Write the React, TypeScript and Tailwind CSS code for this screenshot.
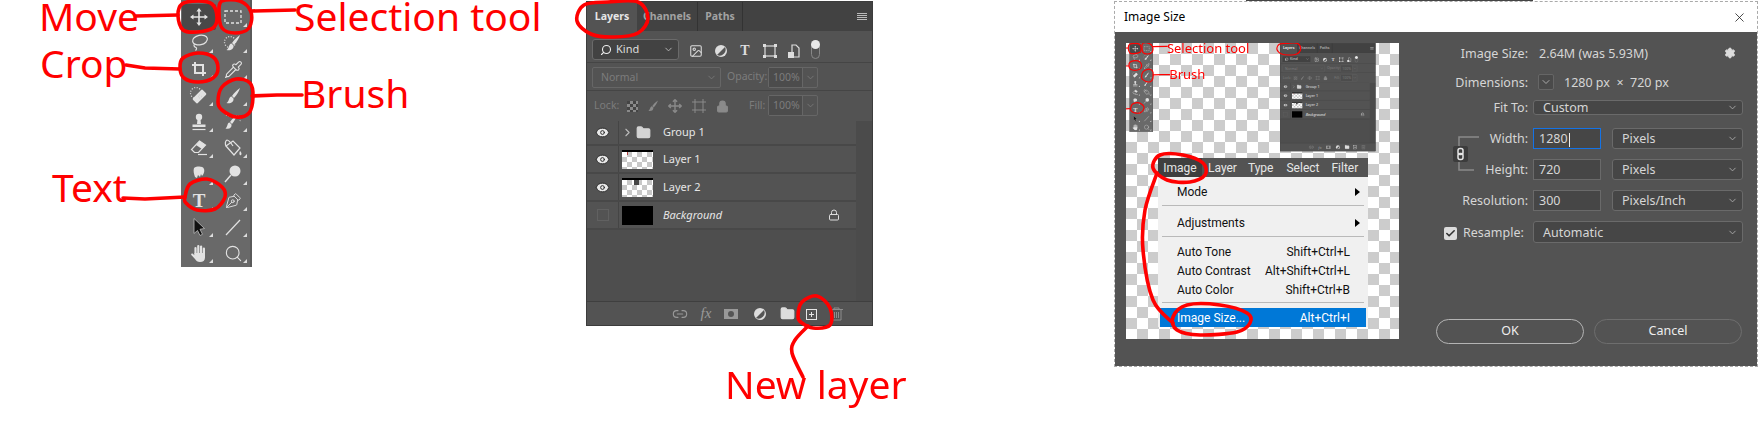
import React from 'react';
import { Pipette, PenTool, Search, Image as ImageIcon, ChevronDown, ChevronRight, Eye, Lock, Folder, Link2, Settings, X, Check } from 'lucide-react';

type Pt = [number, number];

// closed smooth outline through hand-picked points, for the red marker circles
const blob = (pts: Pt[], closed = true) => {
  const n = pts.length;
  const at = (i: number) => (closed ? pts[(i + n) % n] : pts[Math.max(0, Math.min(n - 1, i))]);
  let d = `M${pts[0][0]} ${pts[0][1]}`;
  const last = closed ? n : n - 1;
  for (let i = 0; i < last; i++) {
    const [p0, p1, p2, p3] = [at(i - 1), at(i), at(i + 1), at(i + 2)];
    const c1 = [p1[0] + (p2[0] - p0[0]) / 6, p1[1] + (p2[1] - p0[1]) / 6];
    const c2 = [p2[0] - (p3[0] - p1[0]) / 6, p2[1] - (p3[1] - p1[1]) / 6];
    d += ` C${c1[0]} ${c1[1]} ${c2[0]} ${c2[1]} ${p2[0]} ${p2[1]}`;
  }
  return d + (closed ? 'Z' : '');
};

const Marker = ({ d }: { d: string }) => (
  <path d={d} fill="none" stroke="#ff0000" strokeWidth={3.6} strokeLinecap="round" strokeLinejoin="round" />
);

const Ico = ({ children, size = 20 }: { children: React.ReactNode; size?: number }) => (
  <svg width={size} height={size} viewBox="0 0 20 20" fill="none" stroke="#e2e2e2" strokeWidth={1.2}>
    {children}
  </svg>
);

const brushPath = 'M17 2c-1 3-3 7-6 10l-2-2c2-3 5-6 8-8zM8.500 10.500c-3 .5-2 4.500-5 6.500 4 1 7.500-1 7-4.500z';

const tools: { icon: React.ReactNode; noTri?: boolean }[] = [
  {
    noTri: true,
    icon: (
      <Ico>
        <path d="M10 3v14M3 10h14" strokeWidth={1.6} />
        <path d="M10 1l2.600 3.500h-5.200zM10 19l2.600-3.500h-5.200zM1 10l3.500-2.600v5.200zM19 10l-3.500-2.600v5.200z" fill="#e2e2e2" stroke="none" />
      </Ico>
    ),
  },
  { icon: <Ico><rect x="2" y="4" width="16" height="12" strokeDasharray="3 2" strokeWidth={1.3} /></Ico> },
  { icon: <Ico><ellipse cx="11" cy="7" rx="7.500" ry="4.800" transform="rotate(-12 11 7)" /><path d="M5.500 11c-1.500 2 .5 3 1.500 3.500 1 .5.500 2-.5 3" /></Ico> },
  { icon: <Ico><circle cx="7" cy="9" r="5.500" strokeDasharray="1 1.600" strokeWidth={1.3} /><path d={brushPath} fill="#e2e2e2" stroke="none" /></Ico> },
  { icon: <Ico><path d="M6 3v11h11M3 6h11v11" strokeWidth={2} /></Ico> },
  { icon: <Pipette size={19} color="#e2e2e2" strokeWidth={1.4} /> },
  {
    icon: (
      <Ico>
        <circle cx="7" cy="7" r="5.500" strokeDasharray="1 1.600" />
        <rect x="3.500" y="7" width="14" height="7" rx="1.500" transform="rotate(-45 10.500 10.500)" fill="#e2e2e2" stroke="none" />
        <path d="M9 10.500h.1M10.500 9h.1M12 10.500h.1M10.500 12h.1" stroke="#555" strokeWidth={1.6} />
      </Ico>
    ),
  },
  { icon: <Ico><path d={brushPath} fill="#e2e2e2" stroke="none" /></Ico> },
  { icon: <Ico><circle cx="10" cy="5" r="3.200" fill="#e2e2e2" stroke="none" /><path d="M8.500 7h3l.5 5h-4zM3.500 12.500h13v2.500h-13z" fill="#e2e2e2" stroke="none" /><path d="M3.500 17.500h13" /></Ico> },
  { icon: <Ico><path d="M3 3l6 2M15 4a4 4 0 0 1 2 5" strokeDasharray="1 1.500" /><path d="M14 3c-1 3-2.500 6-5 9l-2-2c2-3 4-5 7-7zM6.500 10.500c-2.500.5-1.500 4-4 6 4 1 6.500-1 6-4z" fill="#e2e2e2" stroke="none" /></Ico> },
  { icon: <Ico><path d="M10.500 3l6 4-7 7.500H5.500l-3-3z" /><path d="M10.500 3l6 4-3.500 4-6-4z" fill="#e2e2e2" stroke="none" /><path d="M9 16.500h9" /></Ico> },
  { icon: <Ico><path d="M3 8l7-5 7 7-6 7z" /><path d="M3 8c-1-2-1-5 1-6 2 0 4 3 6 6" /><path d="M17 13c1.500 1.500 2 3 1 4s-2.500-1-1-4z" fill="#e2e2e2" stroke="none" /></Ico> },
  { icon: <Ico><path d="M5 4c3-2 9-2 10 1 1 3-1 6-2 7l-1-2-1 3-2-2-1 3-2-1c-1-3-2-6-1-9z" fill="#e2e2e2" stroke="none" /></Ico> },
  { icon: <Ico><circle cx="12" cy="7" r="5.500" fill="#e2e2e2" stroke="none" /><path d="M8 11l-6 7" strokeWidth={1.4} /></Ico> },
  { icon: <span className="font-['Liberation_Serif',serif] text-[19px] font-bold leading-none text-[#e2e2e2]">T</span> },
  { icon: <PenTool size={17} color="#e2e2e2" strokeWidth={1.3} className="-scale-y-100" /> },
  { icon: <Ico><path d="M5 1.500v15l3.500-3 2.500 5 2.500-1.200-2.500-5 4.500-.8z" fill="#111" stroke="#bbb" strokeWidth={0.8} /></Ico> },
  { icon: <Ico><path d="M3 18L17 3" /></Ico> },
  {
    icon: (
      <Ico>
        <path d="M6.500 11V5M9.300 10V3M12.100 10V3.500M14.900 11V5.500" strokeWidth={2.2} strokeLinecap="round" />
        <path d="M5.400 10h10.600v4.500c0 3-2 4.500-5 4.500-2.500 0-3.800-1-5-3L2.300 12c-.6-1 .8-2 1.800-1l1.300 1.300z" fill="#e2e2e2" stroke="none" />
      </Ico>
    ),
  },
  { icon: <Search size={19} color="#e2e2e2" strokeWidth={1.4} /> },
];

const Toolbar = () => (
  <div className="absolute left-[181px] top-0 grid h-[267px] w-[71px] grid-cols-[34px_34px] auto-rows-[26.3px] content-start border-r-[2px] border-r-[#5a5a5a] bg-[#696969] pl-px pt-[3.5px]">
    {tools.map((t, i) => (
      <div key={i} className={`relative flex items-center justify-center ${i === 0 ? 'rounded-[2px] bg-[#484848]' : ''}`}>
        {t.icon}
        {!t.noTri && (
          <span className="absolute bottom-[3px] right-[3px] h-0 w-0 border-b-[4px] border-l-[4px] border-b-[#dcdcdc] border-l-transparent" />
        )}
      </div>
    ))}
  </div>
);

const Label = ({ className, children }: { className: string; children: React.ReactNode }) => (
  <span className={`absolute whitespace-nowrap font-['Noto_Sans',sans-serif] text-[39px] leading-[30px] text-[#ff0000] ${className}`}>{children}</span>
);

// toolbar plus its hand-written callouts; also shown shrunk inside the dialog preview
const ToolFigure = () => (
  <div className="relative h-[270px] w-[560px]">
    <Toolbar />
    <svg className="absolute left-0 top-0 overflow-visible" width={560} height={270}>
      <Marker d={blob([[178, 16], [182, 4], [198, 1], [212, 4], [217, 17], [213, 28], [197, 32], [183, 30]])} />
      <Marker d="M136 16L178 15" />
      <Marker d={blob([[219, 12], [222, 1], [240, 1], [251, 12], [249, 28], [235, 33], [222, 28]])} />
      <Marker d="M251 11L295 10" />
      <Marker d={blob([[180, 68], [183, 58], [198, 53], [213, 57], [218, 68], [213, 78], [198, 82], [184, 78]])} />
      <Marker d="M126 65L145 68L180 69" />
      <Marker d={blob([[218, 102], [222, 87], [236, 79], [250, 83], [253, 97], [249, 113], [236, 117], [222, 110]])} />
      <Marker d="M252 96L277 95L302 95" />
      <Marker d={blob([[185, 197], [190, 184], [207, 179], [222, 187], [225, 197], [215, 209], [197, 210], [186, 203]])} />
      <Marker d="M123 198L145 199L185 197" />
    </svg>
    <Label className="left-[39px] top-[1px]">Move</Label>
    <Label className="left-[294px] top-[1px]">Selection tool</Label>
    <Label className="left-[40px] top-[48px]">Crop</Label>
    <Label className="left-[301px] top-[78px]">Brush</Label>
    <Label className="left-[52px] top-[172px]">Text</Label>
  </div>
);

const Thumb = ({ mark }: { mark?: 'red' | 'dark' }) => (
  <div className="relative h-[19px] w-[31px] border-t-2 border-t-black bg-[repeating-conic-gradient(#c8c8c8_0_25%,#ffffff_0_50%)] bg-[length:10px_10px]">
    {mark === 'red' && <i className="absolute left-[5px] top-0 h-[3px] w-px bg-[#b04040]" />}
    {mark === 'dark' && <i className="absolute left-[12px] top-0 h-[5px] w-[5px] bg-[#454545]" />}
  </div>
);

const EyeCell = ({ on = true }: { on?: boolean }) => (
  <div className="flex w-[32px] shrink-0 items-center justify-center self-stretch border-r border-r-[#454545]">
    {on ? (
      <Eye size={15} color="#2e2e2e" fill="#e8e8e8" strokeWidth={1.6} />
    ) : (
      <span className="h-[12px] w-[12px] border border-[#616161]" />
    )}
  </div>
);

const Mute = ({ className, children }: { className: string; children: React.ReactNode }) => (
  <span className={`absolute text-[10.500px] text-[#7c7c7c] ${className}`}>{children}</span>
);

const PctBox = ({ left }: { left: string }) => (
  <div className={`absolute top-[4px] flex h-[21px] w-[50px] rounded-[2px] border border-[#666] ${left}`}>
    <span className="flex-1 bg-[#4c4c4c] pl-[4px] text-[10.500px] leading-[19px] text-[#7c7c7c]">100%</span>
    <span className="flex w-[15px] items-center justify-center border-l border-l-[#666]">
      <ChevronDown size={11} color="#777" />
    </span>
  </div>
);

const LayersPanel = ({ circled }: { circled?: boolean }) => (
  <div className="relative flex h-[325px] w-[287px] flex-col border border-[#3c3c3c] bg-[#535353] font-['Noto_Sans',sans-serif]">
    <div className="flex h-[29px] shrink-0 items-stretch bg-[#424242] text-[10.500px] font-bold">
      <span className="flex w-[50px] items-center justify-center bg-[#535353] text-[#e6e6e6]">Layers</span>
      <span className="flex w-[61px] items-center justify-center border-r border-r-[#333] text-[#a2a2a2]">Channels</span>
      <span className="flex w-[45px] items-center justify-center border-r border-r-[#333] text-[#a2a2a2]">Paths</span>
      <span className="ml-auto mr-[5px] flex w-[10px] flex-col justify-center gap-[1px]">
        <i className="h-px bg-[#bbb]" /><i className="h-px bg-[#bbb]" /><i className="h-px bg-[#bbb]" /><i className="h-px bg-[#bbb]" />
      </span>
    </div>

    <div className="relative h-[32px] shrink-0 border-b border-b-[#454545]">
      <div className="absolute left-[5px] top-[8px] flex h-[21px] w-[87px] items-center rounded-[3px] border border-[#6a6a6a] bg-[#424242] pl-[7px] text-[11px] text-[#dedede]">
        <Search size={12} color="#eee" strokeWidth={2.2} className="-scale-x-100" />
        <span className="ml-[4px]">Kind</span>
        <ChevronDown size={11} color="#bbb" className="ml-auto mr-[4px]" />
      </div>
      <div className="absolute left-[102px] top-[11px] flex items-center gap-[10.500px]">
        <ImageIcon size={14} color="#ddd" strokeWidth={1.8} />
        <svg width="14" height="14" viewBox="0 0 14 14"><circle cx="7" cy="7" r="6" fill="#ddd" /><path d="M3 11L11 3A6 6 0 0 1 3 11z" fill="#555" /></svg>
        <span className="w-[14px] text-center font-['Liberation_Serif',serif] text-[14px] font-bold leading-[14px] text-[#ddd]">T</span>
        <svg width="14" height="14" viewBox="0 0 14 14" fill="none" stroke="#ddd" strokeWidth="1.2"><rect x="2" y="2" width="10" height="10" /><path d="M0 0h3v3H0zM11 0h3v3h-3zM0 11h3v3H0zM11 11h3v3h-3z" fill="#ddd" stroke="none" /></svg>
        <svg width="14" height="14" viewBox="0 0 14 14" fill="none" stroke="#ddd" strokeWidth="1.2"><path d="M5 1h4l3 3v9H5z" /><rect x="1" y="8" width="6" height="6" fill="#ddd" stroke="none" /></svg>
        <span className="relative ml-[-1px] h-[17px] w-[9px] rounded-full border border-[#888]">
          <i className="absolute left-[-1px] top-[-3px] h-[9px] w-[9px] rounded-full bg-[#e8e8e8]" />
        </span>
      </div>
    </div>

    <div className="relative h-[28px] shrink-0 border-b border-b-[#454545]">
      <div className="absolute left-[5px] top-[4px] flex h-[21px] w-[129px] items-center rounded-[2px] border border-[#666] pl-[8px] text-[10.500px] text-[#7c7c7c]">
        Normal
        <ChevronDown size={11} color="#777" className="ml-auto mr-[3px]" />
      </div>
      <Mute className="left-[140px] top-[6px]">Opacity:</Mute>
      <PctBox left="left-[181px]" />
    </div>

    <div className="relative h-[30px] shrink-0">
      <Mute className="left-[7px] top-[7px]">Lock:</Mute>
      <div className="absolute left-[40px] top-[8px] flex items-center gap-[8px]">
        <span className="h-[11px] w-[11px] bg-[repeating-conic-gradient(#8a8a8a_0_25%,#444_0_50%)] bg-[length:6px_6px]" />
        <svg width="14" height="14" viewBox="0 0 20 20"><path d={brushPath} fill="#8a8a8a" /></svg>
        <svg width="14" height="14" viewBox="0 0 20 20" fill="none" stroke="#8a8a8a" strokeWidth="2"><path d="M10 1v18M1 10h18M7 4l3-3 3 3M7 16l3 3 3-3M4 7l-3 3 3 3M16 7l3 3-3 3" /></svg>
        <svg className="ml-[2px]" width="14" height="14" viewBox="0 0 14 14" fill="none" stroke="#8a8a8a"><path d="M0 3h14M3 0v14M11 0v14M0 11h14" /></svg>
        <Lock size={13} color="#8a8a8a" fill="#8a8a8a" className="ml-[2px]" />
      </div>
      <Mute className="left-[162px] top-[7px]">Fill:</Mute>
      <PctBox left="left-[181px]" />
    </div>

    <div className="flex min-h-0 flex-1">
      <div className="flex w-[269px] flex-col bg-[#4e4e4e] text-[11px] text-[#e6e6e6]">
        <div className="flex h-[25px] items-center border-b-2 border-b-[#484848] bg-[#535353]">
          <EyeCell />
          <ChevronRight size={13} color="#bbb" className="ml-[2px]" />
          <Folder size={15} color="#d4d4d4" fill="#d4d4d4" className="ml-[2px]" />
          <span className="ml-[12px]">Group 1</span>
        </div>
        <div className="flex h-[28px] items-center border-b-2 border-b-[#484848] bg-[#535353]">
          <EyeCell />
          <span className="ml-[3px]"><Thumb mark="red" /></span>
          <span className="ml-[10px]">Layer 1</span>
        </div>
        <div className="flex h-[28px] items-center border-b-2 border-b-[#484848] bg-[#535353]">
          <EyeCell />
          <span className="ml-[3px]"><Thumb mark="dark" /></span>
          <span className="ml-[10px]">Layer 2</span>
        </div>
        <div className="flex h-[28px] items-center border-b-2 border-b-[#484848] bg-[#535353]">
          <EyeCell on={false} />
          <span className="ml-[3px] h-[19px] w-[31px] bg-black" />
          <span className="ml-[10px] italic">Background</span>
          <Lock size={12} color="#ddd" className="ml-auto mr-[16px]" />
        </div>
      </div>
      <div className="flex-1 bg-[#4b4b4b]" />
    </div>

    <div className="flex h-[24px] shrink-0 items-center justify-end gap-[9px] border-t border-t-[#3f3f3f] bg-[#535353] pr-[29px]">
      <Link2 size={16} color="#999" strokeWidth={1.7} />
      <span className="w-[18px] text-center font-['Liberation_Serif',serif] text-[15px] italic leading-none text-[#999]">fx</span>
      <svg width="16" height="12" viewBox="0 0 16 12"><rect width="14" height="10" y="1" fill="#999" /><circle cx="7" cy="6" r="3" fill="#555" /></svg>
      <svg className="ml-[3px]" width="16" height="14" viewBox="0 0 14 14"><circle cx="7" cy="7" r="6" fill="#ddd" /><path d="M3 11L11 3A6 6 0 0 1 3 11z" fill="#555" /></svg>
      <Folder size={15} color="#ddd" fill="#ddd" className="ml-[3px]" />
      <svg width="14" height="14" viewBox="0 0 14 14" fill="none" stroke="#e6e6e6"><rect x="2.500" y="2.500" width="10" height="10" /><path d="M7.500 5v5M5 7.500h5" /></svg>
      <svg className="ml-[3px]" width="13" height="14" viewBox="0 0 13 14" fill="none" stroke="#8d8d8d"><path d="M0 2.500h13M4 2.500V1h5v1.500M2 3v10h9V3M4.500 5v6M6.500 5v6M8.500 5v6" /></svg>
    </div>

    {circled && (
      <svg className="absolute left-0 top-0 overflow-visible" width={287} height={325}>
        <Marker d={blob([[-10, 19], [-3, 3], [21, 0], [51, 0], [61, 16], [51, 31], [27, 35], [4, 32]])} />
      </svg>
    )}
  </div>
);

const MenuRow = ({ left, right, arrow }: { left: string; right?: string; arrow?: boolean }) => (
  <div className={`flex h-[19px] items-center pl-[17px] text-[12px] text-[#111] ${arrow ? 'pr-[6px]' : 'pr-[16px]'}`}>
    <span>{left}</span>
    {right && <span className="ml-auto">{right}</span>}
    {arrow && <span className="ml-auto h-0 w-0 border-y-[4px] border-l-[5px] border-y-transparent border-l-black" />}
  </div>
);

const Sep = ({ my }: { my: string }) => <div className={`mx-[2px] h-px bg-[#b9b9b9] ${my}`} />;

const Preview = () => (
  <div className="relative h-[296px] w-[273px] shrink-0 overflow-hidden bg-[repeating-conic-gradient(#cccccc_0_25%,#ffffff_0_50%)] bg-[length:22px_22px]">
    <div className="absolute left-[-57px] top-0 origin-top-left scale-[0.333]">
      <ToolFigure />
    </div>
    <div className="absolute left-[154px] top-0 origin-top-left scale-[0.333]">
      <LayersPanel circled />
    </div>
    <div className="absolute left-[32px] top-[115px] w-[210px] font-['Roboto',sans-serif]">
      <div className="flex h-[19px] items-center overflow-hidden whitespace-nowrap bg-[#535353] text-[12px] text-[#e6e6e6]">
        <span className="flex h-full w-[44px] shrink-0 items-center justify-center bg-[#3f3f3f]">Image</span>
        <span className="ml-[6px]">Layer</span>
        <span className="ml-[11px]">Type</span>
        <span className="ml-[13px]">Select</span>
        <span className="ml-[12px]">Filter</span>
        <span className="ml-[12px]">3D</span>
      </div>
      <div className="h-[150px] bg-[#f0f0f0] px-[2px] pt-[5px]">
        <MenuRow left="Mode" arrow />
        <Sep my="my-[4px]" />
        <div className="h-[3px]" />
        <MenuRow left="Adjustments" arrow />
        <Sep my="my-[4px]" />
        <div className="h-[1px]" />
        <MenuRow left="Auto Tone" right="Shift+Ctrl+L" />
        <MenuRow left="Auto Contrast" right="Alt+Shift+Ctrl+L" />
        <MenuRow left="Auto Color" right="Shift+Ctrl+B" />
        <Sep my="mt-[3px] mb-[5px]" />
        <div className="flex h-[19px] items-center bg-[#0078d7] pl-[17px] pr-[16px] text-[12px] text-white">
          <span>Image Size...</span>
          <span className="ml-auto">Alt+Ctrl+I</span>
        </div>
      </div>
    </div>
  </div>
);

const Field = ({ w, value, focus }: { w?: string; value: string; focus?: boolean }) => (
  <div className={`flex h-full items-center border bg-[#464646] pl-[5px] pt-[2px] ${w ?? 'w-[68px]'} ${focus ? 'border-[#1473e6]' : 'border-[#6a6a6a]'}`}>
    {value}
    {focus && <i className="ml-px h-[14px] w-px bg-[#eee]" />}
  </div>
);

const Drop = ({ value, w, pad }: { value: string; w: string; pad: string }) => (
  <div className={`flex h-full items-center rounded-[3px] border border-[#6a6a6a] bg-[#464646] ${pad} ${w}`}>
    <span className="mt-[2px]">{value}</span>
    <ChevronDown size={11} color="#aaa" className="ml-auto mr-[4px]" />
  </div>
);

const Row = ({ label, h, mt, children }: { label: React.ReactNode; h: string; mt: string; children: React.ReactNode }) => (
  <div className={`flex items-center ${h} ${mt}`}>
    <div className="w-[103px] shrink-0 pt-[2px] text-right">{label}</div>
    <div className="ml-[5px] flex h-full min-w-0 flex-1 items-center">{children}</div>
  </div>
);

const DialogForm = () => (
  <div className="relative ml-[26px] flex w-[318px] flex-col pt-px text-[12.500px] text-[#d6d6d6]">
    <Row label="Image Size:" h="h-[18px]" mt="mt-0">
      <span className="ml-[6px] mt-[2px]">2.64M (was 5.93M)</span>
      <Settings size={12} color="#ddd" fill="#ddd" className="ml-auto mr-[7px]" />
    </Row>
    <Row label="Dimensions:" h="h-[18px]" mt="mt-[11px]">
      <span className="ml-[5px] flex h-[16px] w-[16px] items-center justify-center rounded-[2px] border border-[#666] bg-[#4a4a4a]">
        <ChevronDown size={12} color="#aaa" />
      </span>
      <span className="ml-[10px] mt-[2px]">1280 px&nbsp; ×&nbsp; 720 px</span>
    </Row>
    <Row label="Fit To:" h="h-[15px]" mt="mt-[9px]">
      <Drop value="Custom" w="w-[210px]" pad="pl-[9px]" />
    </Row>
    <Row label="Width:" h="h-[21px]" mt="mt-[13px]">
      <Field value="1280" focus />
      <span className="w-[11px]" />
      <Drop value="Pixels" w="w-[131px]" pad="pl-[9px]" />
    </Row>
    <Row label="Height:" h="h-[21px]" mt="mt-[10px]">
      <Field value="720" />
      <span className="w-[11px]" />
      <Drop value="Pixels" w="w-[131px]" pad="pl-[9px]" />
    </Row>
    <Row label="Resolution:" h="h-[21px]" mt="mt-[10px]">
      <Field value="300" />
      <span className="w-[11px]" />
      <Drop value="Pixels/Inch" w="w-[131px]" pad="pl-[9px]" />
    </Row>
    <Row
      label={
        <span className="flex items-center pl-[19px]">
          <span className="flex h-[13px] w-[13px] items-center justify-center rounded-[2px] bg-[#dcdcdc]">
            <Check size={11} color="#333" strokeWidth={3.5} />
          </span>
          <span className="ml-[6px]">Resample:</span>
        </span>
      }
      h="h-[22px]"
      mt="mt-[10px]"
    >
      <Drop value="Automatic" w="w-[210px]" pad="pl-[9px]" />
    </Row>

    <div className="ml-[11px] mt-[76px] flex gap-[10px]">
      <button className="h-[25px] w-[148px] rounded-full border border-[#b4b4b4] text-[12.500px] text-[#eeeeee]">OK</button>
      <button className="h-[25px] w-[148px] rounded-full border border-[#6e6e6e] text-[12.500px] text-[#eeeeee]">Cancel</button>
    </div>

    {/* constrain-proportions bracket sits across the width and height rows */}
    <svg className="absolute left-[28px] top-[93px]" width="36" height="38" viewBox="0 0 36 38" fill="none">
      <path d="M6 10V1H26M6 26V34H21" stroke="#8a8a8a" strokeWidth="1.5" />
      <rect x="0" y="10" width="15" height="16" rx="2" fill="#3c3c3c" />
      <rect x="5" y="12.500" width="5" height="6" rx="2" stroke="#e6e6e6" strokeWidth="1.500" />
      <rect x="5" y="17.500" width="5" height="6" rx="2" stroke="#e6e6e6" strokeWidth="1.500" />
    </svg>
  </div>
);

const ImageSizeDialog = () => (
  <div className="absolute left-[1114px] top-[1px] flex h-[366px] w-[644px] flex-col border border-dashed border-[#aaaaaa] font-['Noto_Sans',sans-serif]">
    <div className="flex h-[30px] shrink-0 items-center bg-white pl-[9px] pr-[10px] text-[12px] text-black">
      Image Size
      <X size={15} color="#222" strokeWidth={1.3} className="ml-auto" />
    </div>
    <div className="flex flex-1 bg-[#535353] pl-[11px] pt-[11px]">
      <Preview />
      <DialogForm />
    </div>
  </div>
);

export default function App() {
  return (
    <div className="relative h-[421px] w-[1758px] overflow-hidden bg-white">
      <ToolFigure />

      <div className="absolute left-[586px] top-[1px]">
        <LayersPanel circled />
      </div>

      <div className="absolute left-[1246px] top-0 h-[1px] w-[287px] bg-[#444]" />
      <ImageSizeDialog />

      <svg className="pointer-events-none absolute left-0 top-0" width={1758} height={421}>
        <Marker d={blob([[798, 317], [802, 302], [817, 296], [830, 308], [830, 325], [813, 328], [802, 323]])} />
        <Marker d={blob([[808, 326], [795, 340], [792, 353], [803, 377]], false)} />
        <Marker d={blob([[1153, 168], [1160, 155], [1183, 155], [1203, 163], [1205, 175], [1190, 182], [1167, 180]])} />
        <Marker d={blob([[1157, 173], [1145, 210], [1143, 250], [1153, 300], [1173, 323]], false)} />
        <Marker d={blob([[1173, 317], [1187, 305], [1220, 305], [1247, 313], [1250, 323], [1237, 332], [1200, 335], [1177, 330]])} />
      </svg>
      <Label className="left-[725px] top-[369px]">New layer</Label>
    </div>
  );
}
